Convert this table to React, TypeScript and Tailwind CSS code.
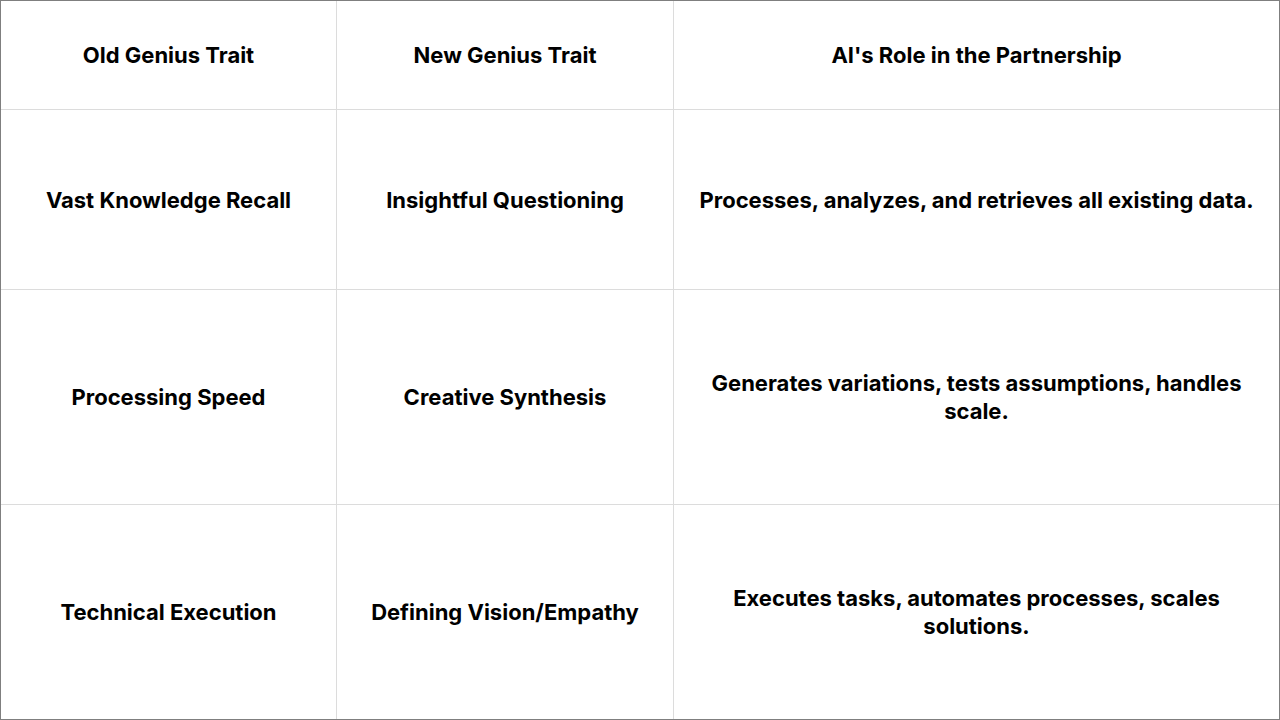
const rows = [
  ['Old Genius Trait', 'New Genius Trait', "AI's Role in the Partnership"],
  ['Vast Knowledge Recall', 'Insightful Questioning', 'Processes, analyzes, and retrieves all existing data.'],
  ['Processing Speed', 'Creative Synthesis', 'Generates variations, tests assumptions, handles scale.'],
  ['Technical Execution', 'Defining Vision/Empathy', 'Executes tasks, automates processes, scales solutions.'],
];

export default function App() {
  return (
    <div
      className="w-[1280px] h-[720px] bg-white border border-[#7f7f7f] grid grid-cols-[336px_337px_1fr] grid-rows-[109px_180px_215px_1fr] text-black"
      style={{ fontFamily: 'Inter, "Open Sans", sans-serif' }}
    >
      {rows.map((row, r) =>
        row.map((cell, c) => (
          <div
            key={`${r}-${c}`}
            className={`flex items-center justify-center text-center px-4 text-[22px] leading-[28px] font-bold ${
              c < 2 ? 'border-r border-[#dcdcdc]' : ''
            } ${r < 3 ? 'border-b border-[#dcdcdc]' : ''}`}
          >
            {cell}
          </div>
        ))
      )}
    </div>
  );
}
